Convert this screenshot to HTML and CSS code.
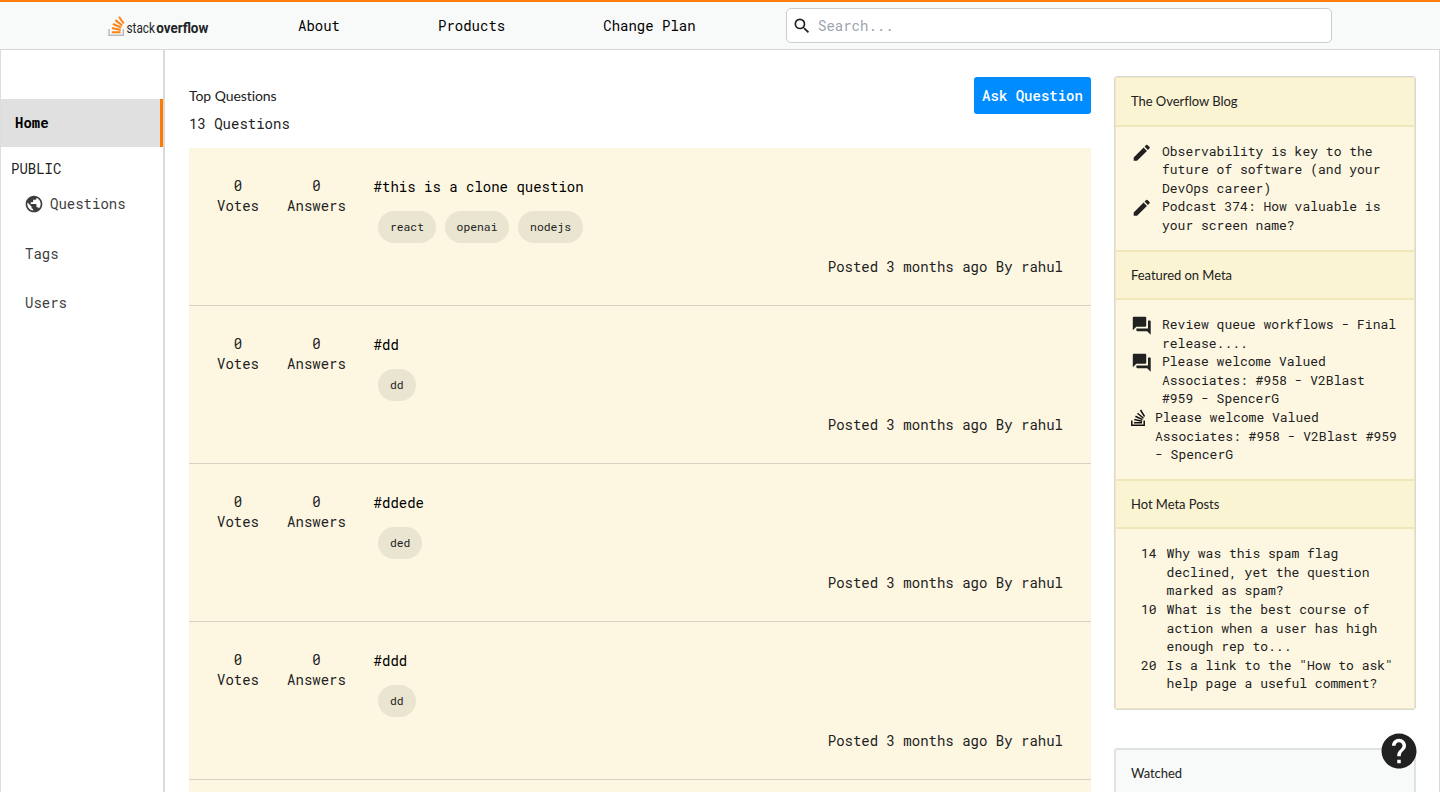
FILE: index.html
```
<!DOCTYPE html>
<html lang="en">
<head>
<meta charset="utf-8">
<title>Stack Overflow</title>
<link rel="stylesheet" href="styles.css">
</head>
<body>
<svg width="0" height="0" class="defs">
  <symbol id="pencil" viewBox="0 0 24 24"><path d="M3 17.250V21h3.750L17.810 9.940l-3.750-3.750L3 17.250zM20.710 7.040a.996.996 0 0 0 0-1.410l-2.340-2.340a.996.996 0 0 0-1.410 0l-1.830 1.830 3.750 3.750 1.830-1.830z"/></symbol>
  <symbol id="forum" viewBox="0 0 24 24"><path d="M21 6h-2v9H6v2c0 .55.45 1 1 1h11l4 4V7c0-.55-.45-1-1-1zm-4 6V3c0-.55-.45-1-1-1H3c-.55 0-1 .45-1 1v14l4-4h10c.55 0 1-.45 1-1z"/></symbol>
</svg>
<header class="topbar">
  <svg class="logo" width="106" height="24" viewBox="0 0 106 24">
    <path d="M1 15V21.300H15.300V15" fill="none" stroke="#bcbbbb" stroke-width="1.500"/>
    <g stroke="#ff8212" stroke-width="2" fill="none">
      <path d="M3.700 18.200H12.600M3.900 14.100L12.700 15.900M5 10L13.200 13.700M7.400 6.100L14.200 11.500M11 2.800L15.700 9.500"/>
    </g>
    <text class="logo-light" x="18.500" y="18.500" textLength="28.500" lengthAdjust="spacingAndGlyphs">stack</text>
    <text class="logo-bold" x="48.300" y="18.500" textLength="52" lengthAdjust="spacingAndGlyphs">overflow</text>
  </svg>
  <nav class="nav"><a>About</a><a>Products</a><a>Change Plan</a></nav>
  <div class="search">
    <svg width="20" height="20" viewBox="0 0 24 24"><path d="M15.500 14h-.790l-.280-.270A6.471 6.471 0 0 0 16 9.500 6.500 6.500 0 1 0 9.500 16c1.610 0 3.090-.590 4.230-1.570l.270.280v.790l5 4.990L20.490 19l-4.990-5zm-6 0C7.010 14 5 11.990 5 9.500S7.010 5 9.500 5 14 7.010 14 9.500 11.990 14 9.500 14z"/></svg>
    <span>Search...</span>
  </div>
</header>
<div class="layout">
  <aside class="sidebar">
    <div class="home">Home</div>
    <div class="public">PUBLIC</div>
    <div class="side-link">
      <svg width="20" height="20" viewBox="0 0 24 24"><path d="M12 2C6.480 2 2 6.480 2 12s4.480 10 10 10 10-4.480 10-10S17.520 2 12 2zm-1 17.930c-3.950-.490-7-3.850-7-7.930 0-.620.080-1.210.210-1.790L9 15v1c0 1.100.900 2 2 2v1.930zm6.900-2.540c-.260-.810-1-1.390-1.900-1.390h-1v-3c0-.550-.450-1-1-1H8v-2h2c.550 0 1-.450 1-1V7h2c1.100 0 2-.900 2-2v-.410c2.930 1.190 5 4.060 5 7.410 0 2.080-.800 3.970-2.100 5.390z"/></svg>
      <span>Questions</span>
    </div>
    <div class="side-link">Tags</div>
    <div class="side-link">Users</div>
  </aside>
  <main class="main">
    <div class="heading">
      <div><h1>Top Questions</h1><p>13 Questions</p></div>
      <button class="ask">Ask Question</button>
    </div>
    <section class="questions">
      <article class="question">
        <div class="stat votes"><span>0</span><span>Votes</span></div>
        <div class="stat answers"><span>0</span><span>Answers</span></div>
        <div class="info"><h2>#this is a clone question</h2><div class="tags"><span>react</span><span>openai</span><span>nodejs</span></div><p>Posted 3 months ago By rahul</p></div>
      </article>
      <article class="question">
        <div class="stat votes"><span>0</span><span>Votes</span></div>
        <div class="stat answers"><span>0</span><span>Answers</span></div>
        <div class="info"><h2>#dd</h2><div class="tags"><span>dd</span></div><p>Posted 3 months ago By rahul</p></div>
      </article>
      <article class="question">
        <div class="stat votes"><span>0</span><span>Votes</span></div>
        <div class="stat answers"><span>0</span><span>Answers</span></div>
        <div class="info"><h2>#ddede</h2><div class="tags"><span>ded</span></div><p>Posted 3 months ago By rahul</p></div>
      </article>
      <article class="question">
        <div class="stat votes"><span>0</span><span>Votes</span></div>
        <div class="stat answers"><span>0</span><span>Answers</span></div>
        <div class="info"><h2>#ddd</h2><div class="tags"><span>dd</span></div><p>Posted 3 months ago By rahul</p></div>
      </article>
      <div class="question-peek"></div>
    </section>
  </main>
  <aside class="widgets">
    <div class="panel"><div class="panel-inner">
      <h3>The Overflow Blog</h3>
      <ul class="blog">
        <li><svg class="icon"><use href="#pencil"/></svg><span>Observability is key to the future of software (and your DevOps career)</span></li>
        <li><svg class="icon"><use href="#pencil"/></svg><span>Podcast 374: How valuable is your screen name?</span></li>
      </ul>
      <h3>Featured on Meta</h3>
      <ul class="meta">
        <li><svg class="icon"><use href="#forum"/></svg><span>Review queue workflows - Final release....</span></li>
        <li><svg class="icon"><use href="#forum"/></svg><span>Please welcome Valued Associates: #958 - V2Blast #959 - SpencerG</span></li>
        <li><svg class="stack" width="14" height="18" viewBox="0 0 14 18"><path d="M.800 11.500V16.200H13.200V11.500M3 13.700H11M3.300 10.600L11.100 12.200M4.400 7.300L11.500 10.600M6.500 4.200L12.500 9.300M9.500 1L13.600 7.500" fill="none" stroke="#111" stroke-width="1.500"/></svg><span>Please welcome Valued Associates: #958 - V2Blast #959 - SpencerG</span></li>
      </ul>
      <h3>Hot Meta Posts</h3>
      <ul class="posts">
        <li><b>14</b><span>Why was this spam flag declined, yet the question marked as spam?</span></li>
        <li><b>10</b><span>What is the best course of action when a user has high enough rep to...</span></li>
        <li><b>20</b><span>Is a link to the "How to ask" help page a useful comment?</span></li>
      </ul>
    </div></div>
    <div class="panel watched"><h3>Watched</h3></div>
  </aside>
</div>
<svg class="help" width="42" height="42" viewBox="0 0 24 24"><circle cx="12" cy="12" r="9" fill="#fff"/><path d="M12 2C6.480 2 2 6.480 2 12s4.480 10 10 10 10-4.480 10-10S17.520 2 12 2zm1 17h-2v-2h2v2zm2.070-7.750l-.900.920C13.450 12.900 13 13.500 13 15h-2v-.500c0-1.100.450-2.100 1.170-2.830l1.240-1.260c.370-.360.590-.860.590-1.410 0-1.100-.900-2-2-2s-2 .900-2 2H8c0-2.210 1.790-4 4-4s4 1.790 4 4c0 .880-.360 1.680-.930 2.250z" fill="#212121"/></svg>
</body>
</html>
```
FILE: styles.css
```
* { box-sizing: border-box; }
body {
  margin: 0;
  height: 792px;
  overflow: hidden;
  display: flex;
  flex-direction: column;
  background: #fff;
  color: #212121;
  font: 14px/20px "Roboto Mono", "DejaVu Sans Mono", "Liberation Mono", monospace;
}
h1, h2, h3, p, ul { margin: 0; padding: 0; font-weight: 400; }
ul { list-style: none; }
.defs { position: absolute; }
.topbar {
  flex: none;
  height: 50px;
  display: flex;
  align-items: center;
  border-top: 2px solid #ff7d0d;
  border-bottom: 1px solid #d6d9dc;
  background: #f8f9f9;
  padding-left: 108px;
}
.logo { flex: none; }
.logo-light, .logo-bold { font-family: Roboto, sans-serif; font-size: 14px; fill: #222426; }
.logo-light { font-weight: 400; }
.logo-bold { font-weight: 700; }
.nav { display: flex; gap: 98px; width: 572px; flex: none; padding-left: 84px; color: #000; white-space: nowrap; }
.search {
  width: 546px;
  height: 35px;
  display: flex;
  align-items: center;
  gap: 6px;
  padding: 0 5px;
  border: 1px solid #ccc;
  border-radius: 5px;
  background: #fff;
  color: #9ca3af;
}
.search svg { fill: #212121; }
.layout { flex: 1; min-height: 0; display: flex; overflow: hidden; border-right: 1px solid #d6d9dc; }
.sidebar { flex: none; width: 165px; border-left: 1px solid #ddd; border-right: 2px solid #d9dadc; padding-top: 49px; }
.home { height: 48px; padding-left: 14px; line-height: 48px; background: #e0e0e0; border-right: 3px solid #ff7a00; color: #000; font-weight: 700; }
.public { height: 32px; padding: 12px 0 0 10px; }
.side-link { height: 49.700px; padding-left: 24px; display: flex; align-items: center; gap: 6px; color: #3c3c3c; }
.side-link svg { fill: #3c3c3c; margin-left: -1px; }
.main { flex: none; width: 950px; padding: 27px 24px 0; }
.heading { height: 71px; display: flex; justify-content: space-between; align-items: flex-start; }
.heading h1 { font: 14px/20px Lato, sans-serif; letter-spacing: -.070px; padding-top: 9px; }
.heading p { margin-top: 8px; }
.ask { width: 117px; height: 37px; padding: 0; border: 0; border-radius: 3px; background: #008cff; color: #fff; font: 500 14px/20px "Roboto Mono", "DejaVu Sans Mono", monospace; white-space: nowrap; }
.question { height: 158px; display: flex; padding: 28px 28px 0; background: #fdf7e2; border-bottom: 1px solid #d5d3c3; }
.question-peek { height: 12px; background: #fdf7e2; }
.stat { display: flex; flex-direction: column; align-items: center; flex: none; }
.votes { width: 42px; margin-right: 28px; }
.answers { width: 59px; margin-right: 27.600px; }
.info { flex: 1; }
.info h2 { font-size: 14px; line-height: 20px; color: #000; padding-top: 1px; }
.tags { display: flex; gap: 8.600px; margin: 14px 0 0 4.300px; }
.tags span { height: 32px; padding: 0 12px; border-radius: 16px; background: #e9e5d0; font-size: 11.375px; line-height: 32px; }
.info p { text-align: right; margin-top: 14px; }
.widgets { flex: none; width: 301px; padding-top: 26px; margin-left: -1px; }
.panel { width: 302px; border: 1px solid #d6d9dc; border-radius: 3px; font-size: 13px; line-height: 18.590px; }
.panel-inner { border: 1px solid #f1e5bc; border-radius: 2px; background: #fdf7e2; }
.panel h3 { font: 13px/20px Lato, sans-serif; letter-spacing: -.040px; height: 50px; padding: 13px 15px; background: #fbf4d3; border-top: 2px solid #f1e5bc; border-bottom: 2px solid #f1e5bc; }
.panel-inner h3:first-child { border-top: 0; height: 49px; }
.panel ul { padding: 0 15px; }
.panel .blog { height: 123px; padding-top: 14.600px; }
.panel .meta { height: 179px; padding-top: 15.100px; }
.panel .posts { height: 179px; padding-top: 15.300px; }
.panel li { display: flex; align-items: flex-start; }
.icon { width: 21.500px; height: 21.500px; flex: none; margin: 0 10px -3px -.500px; fill: #212121; }
.stack { flex: none; margin: .500px 10px 0 0; }
.panel b { font-weight: 400; margin: 0 10px; }
.watched { margin-top: 38px; height: 60px; background: #f8f9f9; border-width: 2px; border-color: #dfe2e4; }
.panel.watched h3 { background: none; border: 0; }
.help { position: absolute; left: 1378px; top: 730px; }
```
